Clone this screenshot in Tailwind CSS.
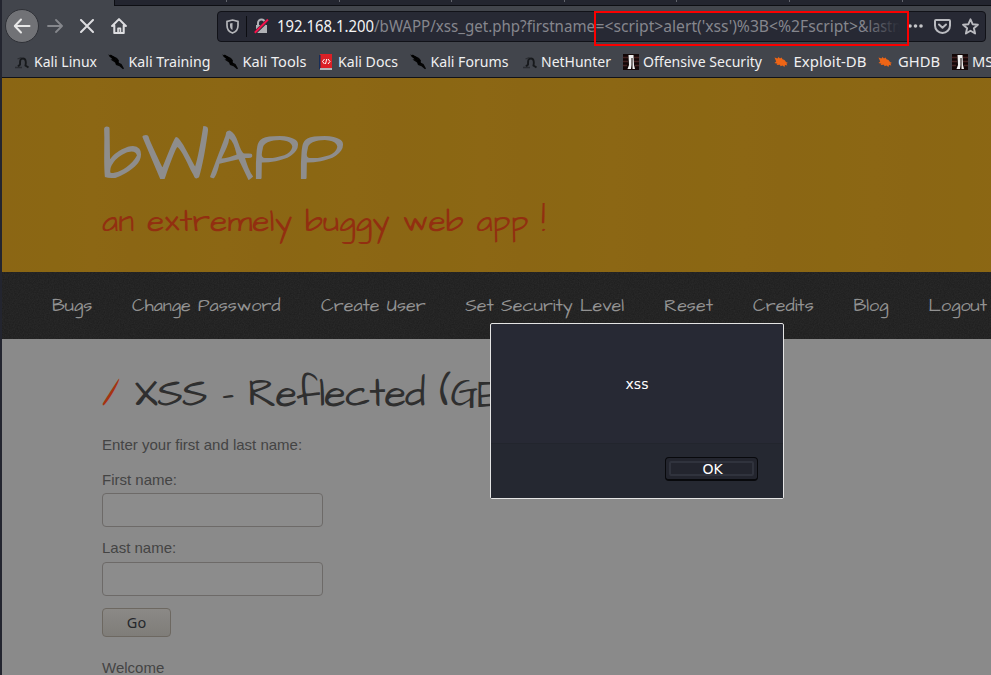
<!DOCTYPE html>
<html lang="en">
<head>
<meta charset="utf-8">
<title>bWAPP - XSS</title>
<script src="https://cdn.jsdelivr.net/npm/@tailwindcss/browser@4"></script>
</head>
<body class="w-[991px] h-[675px] overflow-hidden bg-[#23252f] font-['Noto_Sans',sans-serif]">
<svg class="hidden">
  <defs>
    <symbol id="dragon" viewBox="0 0 16 16"><path d="M0 .5l5 1.500 4 2 2 2.500-.5 2 3 1.500 2.500 4.500-1 .8-3.500-3-3.500-1.300L7 8.500 2.500 5.500l2-.3z" fill="#050505"/><path d="M2 1.500l5 3.500M8 6l2 4" stroke="#000" stroke-width="2.500"/></symbol>
    <symbol id="kali" viewBox="0 0 16 16"><path d="M4 12.500l2-2c0-4 0-6 3-6s3.200 4 2.500 7l3 2" fill="none" stroke="#17191c" stroke-width="1.900"/><path d="M3.500 5l4-1.500M1 13.500h7" stroke="#2b2d32" stroke-width="1.300"/></symbol>
    <symbol id="offsec" viewBox="0 0 16 16"><path d="M0 0h16v16H0z" fill="#130707"/><path d="M0 3.500h5M11 3.500h5M0 7.500h5M11 7.500h5M0 11.500h4M12 11.500h4" stroke="#422" stroke-width="1.300"/><path d="M5.500 1h5l.5 10 1 4H9.500V4h-1v7L8 15H4.500L6 11z" fill="#eee"/></symbol>
    <symbol id="bug" viewBox="0 0 16 16"><path d="M1.500 3.500l3 1L5.500 3l1.500 1.500L8.500 3.500l1 1.800 2 .7 1.500 2 2 1-1.500.6.8 1.800-2.300-.4-.5 2-2-1.500-2 .8-.5-1.500-3.500.2 1-1.300L1.500 9l1.700-1.500z" fill="#ee6516"/></symbol>
  </defs>
</svg>
<div class="flex h-full flex-col pl-[2px]">
  <!-- Browser chrome -->
  <div class="flex h-[78px] flex-col border-b border-[#111218] bg-[#42454c]">
    <div class="flex h-[6px] shrink-0">
      <div class="w-[112px]"></div>
      <div class="flex flex-1 items-start border-b border-l border-[#0d0e13] bg-[#23252f] pl-[111px]">
        <i class="h-[2px] w-[113px] border-l border-[#62646c]"></i><i class="h-[2px] w-[112px] border-l border-[#62646c]"></i><i class="h-[2px] w-[113px] border-l border-[#62646c]"></i><i class="h-[2px] w-[112px] border-l border-[#62646c]"></i><i class="h-[2px] w-[113px] border-l border-[#62646c]"></i><i class="h-[2px] w-[113px] border-l border-[#62646c]"></i><i class="h-[2px] w-[80px] border-l border-[#62646c]"></i>
      </div>
    </div>
    <div class="flex h-[40px] shrink-0 items-center pl-[3px] pr-[5px]">
      <div class="flex size-[34px] items-center justify-center rounded-full border border-[#2f3137] bg-[#717276]">
        <svg class="size-[18px]" viewBox="0 0 18 18" fill="none" stroke="#e8e8e8" stroke-width="2" stroke-linecap="round" stroke-linejoin="round"><path d="M16.500 9H2M8 2.500L1.800 9 8 15.500"/></svg>
      </div>
      <svg class="ml-[8px] size-[16px]" viewBox="0 0 16 16" fill="none" stroke="#85878c" stroke-width="1.800" stroke-linecap="round" stroke-linejoin="round"><path d="M1 8h13.500M9 2l6 6-6 6"/></svg>
      <svg class="ml-[17px] size-[14px]" viewBox="0 0 14 14" fill="none" stroke="#dddde0" stroke-width="2" stroke-linecap="round"><path d="M1 1l12 12M13 1L1 13"/></svg>
      <svg class="ml-[17px] size-[16px]" viewBox="0 0 17 17" fill="none" stroke="#dddde0" stroke-width="2.200" stroke-linejoin="round" stroke-linecap="round"><path d="M1.200 8.500L8.500 1.200l7.300 7.300M3.500 8v8h10V8"/><path d="M7.500 15.500v-4.500h2.500v4.500" stroke-width="1.800"/></svg>
      <div class="ml-auto flex h-[31px] w-[769px] items-center rounded-[4px] border border-[#111218] bg-[#272934] pl-[8px]">
        <svg class="h-[15px] w-[13px]" viewBox="0 0 13 15" fill="none" stroke="#b5b6ba"><path d="M6.500 1L12 2.300v4.200c0 4-2.500 6.500-5.500 7.500C3.500 13 1 10.500 1 6.500V2.300z" stroke-width="1.700"/><path d="M6.500 4v7C4.600 10 4 8.500 4 6.500V4.600z" fill="#b5b6ba" stroke="none"/></svg>
        <i class="ml-[7px] h-[21px] w-px bg-[#0c0d12]"></i>
        <svg class="ml-[7px] h-[16px] w-[15px]" viewBox="0 0 15 16"><path d="M2 7h11v8H2z" fill="#b1b2b6"/><path d="M4 8V5a3.500 3.500 0 017 0v3" stroke="#b1b2b6" stroke-width="2" fill="none"/><path d="M.8 14.800L14 2" stroke="#272934" stroke-width="3.500"/><path d="M.8 14.800L14 1.500" stroke="#f5114a" stroke-width="2"/></svg>
        <svg class="ml-[7px] h-[29px] w-[626px]" font-family="Noto Sans,sans-serif" font-size="15.500"><defs><linearGradient id="fade" gradientUnits="userSpaceOnUse" x1="588" x2="624" y1="0" y2="0"><stop offset="0" stop-color="#85868d"/><stop offset="1" stop-color="#272934"/></linearGradient></defs>
          <text x="1" y="20" fill="#f4f4f5" textLength="97" lengthAdjust="spacingAndGlyphs">192.168.1.200</text><text x="98" y="20" fill="#85868d" textLength="221" lengthAdjust="spacingAndGlyphs">/bWAPP/xss_get.php?firstname</text><text x="319.500" y="20" fill="#85868d" textLength="262.500" lengthAdjust="spacingAndGlyphs">=&lt;script&gt;alert('xss')%3B&lt;%2Fscript&gt;</text><text x="582" y="20" fill="url(#fade)" textLength="43" lengthAdjust="spacingAndGlyphs">&amp;lastn</text></svg>
        <svg class="ml-[6px] h-[4px] w-[15px]" viewBox="0 0 15 4" fill="#c4c5c8"><circle cx="2" cy="2" r="1.800"/><circle cx="7.500" cy="2" r="1.800"/><circle cx="13" cy="2" r="1.800"/></svg>
        <svg class="ml-[11px] h-[15px] w-[17px]" viewBox="0 0 17 15" fill="none" stroke="#babbc0" stroke-width="2" stroke-linecap="round" stroke-linejoin="round"><path d="M2 1h13q1 0 1 1v4.500a7.500 7.500 0 01-15 0V2q0-1 1-1zM5 5.500l3.500 3.300L12 5.500"/></svg>
        <svg class="ml-[11px] size-[17px]" viewBox="0 0 17 17" fill="none" stroke="#babbc0" stroke-width="1.900" stroke-linejoin="round"><path d="M8.500 1.300l2.100 4.900 5.300.5-4 3.500 1.200 5.300-4.600-2.800-4.600 2.800 1.200-5.300-4-3.500 5.300-.5z"/></svg>
      </div>
    </div>
    <div class="flex h-[31px] shrink-0 items-center overflow-hidden whitespace-nowrap pl-[12px] text-[14.670px]">
      <div class="flex w-[93px] shrink-0 items-center gap-[4px]"><svg class="size-[16px]"><use href="#kali"/></svg><svg class="h-[20px] w-[70px]"><text y="15" fill="#f0f0f1" textLength="63" lengthAdjust="spacingAndGlyphs">Kali Linux</text></svg></div>
      <div class="flex w-[114px] shrink-0 items-center gap-[4px]"><svg class="size-[16px] ml-[1px]"><use href="#dragon"/></svg><svg class="h-[20px] w-[90px]"><text x=".5" y="15" fill="#f0f0f1" textLength="82" lengthAdjust="spacingAndGlyphs">Kali Training</text></svg></div>
      <div class="flex w-[97px] shrink-0 items-center gap-[4px]"><svg class="size-[16px] ml-[1px]"><use href="#dragon"/></svg><svg class="h-[20px] w-[72px]"><text x=".5" y="15" fill="#f0f0f1" textLength="64" lengthAdjust="spacingAndGlyphs">Kali Tools</text></svg></div>
      <div class="flex w-[92px] shrink-0 items-center gap-[3px]"><svg class="ml-[1px] size-[16px]" viewBox="0 0 16 16"><path d="M1 0h12v14H1z" fill="#dc2026"/><path d="M0 1h1.500v14H0z" fill="#172e58"/><path d="M1 15h12" stroke="#ddd" stroke-width="1.500"/><path d="M5.500 5L3.500 7.500l2 2.500M9 5l2 2.500L9 10M7.700 5L6.500 10" stroke="#fff" fill="none"/></svg><svg class="h-[20px] w-[70px]"><text y="15" fill="#f0f0f1" textLength="60" lengthAdjust="spacingAndGlyphs">Kali Docs</text></svg></div>
      <div class="flex w-[112px] shrink-0 items-center gap-[4px]"><svg class="size-[16px]"><use href="#dragon"/></svg><svg class="h-[20px] w-[90px]"><text x=".5" y="15" fill="#f0f0f1" textLength="78" lengthAdjust="spacingAndGlyphs">Kali Forums</text></svg></div>
      <div class="flex w-[100px] shrink-0 items-center gap-[3px]"><svg class="size-[16px]"><use href="#kali"/></svg><svg class="h-[20px] w-[80px]"><text y="15" fill="#f0f0f1" textLength="70" lengthAdjust="spacingAndGlyphs">NetHunter</text></svg></div>
      <div class="flex w-[151px] shrink-0 items-center gap-[4px]"><svg class="size-[16px] ml-[1px]"><use href="#offsec"/></svg><svg class="h-[20px] w-[128px]"><text y="15" fill="#f0f0f1" textLength="119" lengthAdjust="spacingAndGlyphs">Offensive Security</text></svg></div>
      <div class="flex w-[104px] shrink-0 items-center gap-[4px]"><svg class="size-[16px]"><use href="#bug"/></svg><svg class="h-[20px] w-[82px]"><text x=".5" y="15" fill="#f0f0f1" textLength="73" lengthAdjust="spacingAndGlyphs">Exploit-DB</text></svg></div>
      <div class="flex w-[75px] shrink-0 items-center gap-[5px]"><svg class="size-[16px]"><use href="#bug"/></svg><svg class="h-[20px] w-[52px]"><text y="15" fill="#f0f0f1" textLength="42" lengthAdjust="spacingAndGlyphs">GHDB</text></svg></div>
      <div class="flex w-[100px] shrink-0 items-center gap-[4px]"><svg class="size-[16px]"><use href="#offsec"/></svg><svg class="h-[20px] w-[52px]"><text y="15" fill="#f0f0f1">MS</text></svg></div>
    </div>
  </div>
  <!-- Site header -->
  <header class="h-[194px] shrink-0 bg-[#8b6714] bg-[repeating-linear-gradient(90deg,#8b6614_0px,#8b6713_53px,#8c6714_91px,#8b6614_130px)]">
    <svg class="h-[194px] w-[989px]" font-family="Architects Daughter,Lato,sans-serif">
      <text x="100" y="101" font-size="72" letter-spacing="-1" fill="#8e8d8c">bWAPP</text>
      <text x="100" y="153" fill="#922f10" font-size="32">an extremely buggy web app !</text>
    </svg>
  </header>
  <nav class="h-[67px] shrink-0 bg-[#222]">
    <svg class="h-[67px] w-[989px]" font-family="Architects Daughter,Lato,sans-serif" font-size="18" fill="#929292">
      <filter id="grain" x="0" y="0" width="100%" height="100%"><feTurbulence type="fractalNoise" baseFrequency=".8" numOctaves="2"/><feColorMatrix values="0 0 0 0 .5  0 0 0 0 .5  0 0 0 0 .5  0 0 0 .1 0"/></filter>
      <rect width="989" height="67" fill="#1c1c1c"/><rect width="989" height="67" filter="url(#grain)"/>
      <text x="50" y="39">Bugs</text>
      <text x="130" y="39">Change Password</text>
      <text x="319" y="39">Create User</text>
      <text x="463.300" y="39">Set Security Level</text>
      <text x="662.300" y="39">Reset</text>
      <text x="751" y="39">Credits</text>
      <text x="851.400" y="39">Blog</text>
      <text x="926.600" y="39">Logout</text>
    </svg>
  </nav>
  <!-- Page content -->
  <main class="flex flex-1 flex-col items-start overflow-hidden bg-[#8a8a8a] pl-[100px] font-['Liberation_Sans',sans-serif] text-[15px] leading-[20px] text-[#444]">
    <svg class="h-[96px] w-[440px] shrink-0" font-family="Architects Daughter,Lato,sans-serif" font-size="40" letter-spacing="-1" fill="#2f2f2f">
      <text x="0" y="67"><tspan fill="#a53310">/</tspan> XSS - Reflected (GET)</text>
    </svg>
    <p>Enter your first and last name:</p>
    <label class="mt-[15px]">First name:</label>
    <div class="mt-[3px] h-[34px] w-[221px] shrink-0 rounded-[4px] border border-[#6d6a68] bg-[#8c8c8c]"></div>
    <label class="mt-[11px]">Last name:</label>
    <div class="mt-[4px] h-[34px] w-[221px] shrink-0 rounded-[4px] border border-[#6d6a68] bg-[#8c8c8c]"></div>
    <button class="mt-[12px] h-[29px] w-[69px] shrink-0 rounded-[4px] border border-[#6d6861] bg-linear-to-b from-[#8b8986] to-[#7f7d79] pb-[2px] font-['Noto_Sans',sans-serif] text-[14.500px] text-[#26282c]">Go</button>
    <p class="mt-[21px] shrink-0">Welcome</p>
  </main>
</div>
<!-- Alert dialog -->
<div class="absolute left-[490px] top-[323px] flex h-[176px] w-[294px] flex-col rounded-[2px] border border-[#e4e4e4] bg-[#272934] font-['DejaVu_Sans',sans-serif] text-[14px] text-white">
  <div class="flex h-[119px] items-center justify-center pt-[2px]">xss</div>
  <div class="flex flex-1 items-start justify-end border-t border-[#22252d] bg-[#252831] pr-[25px] pt-[13px]">
    <button class="h-[24px] w-[93px] rounded-[4px] border border-b-2 border-[#08090c] bg-[#23252e] p-[3px] text-[14px]"><span class="flex h-full items-center justify-center rounded-[2px] border-2 border-[#30333d] pl-[2px] leading-none">OK</span></button>
  </div>
</div>
<!-- Highlight frame over the query string -->
<div class="absolute left-[594px] top-[11px] h-[35px] w-[315px] border-2 border-[#fb0000]"></div>
</body>
</html>
